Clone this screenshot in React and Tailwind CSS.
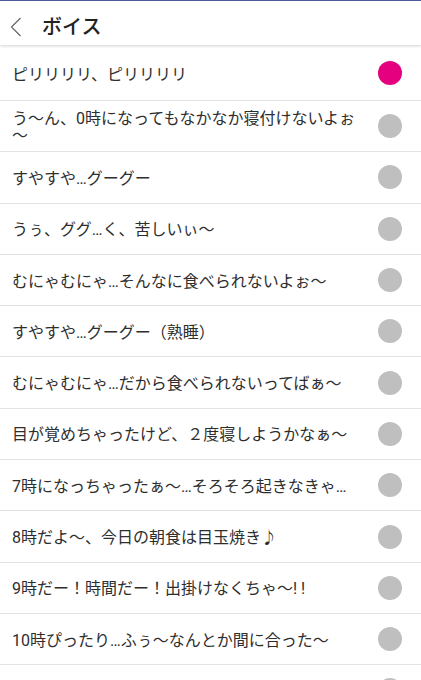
const items = [
  { label: "ピリリリリ、ピリリリリ", active: true },
  { label: "う〜ん、0時になってもなかなか寝付けないよぉ〜" },
  { label: "すやすや…グーグー" },
  { label: "うぅ、ググ…く、苦しいぃ〜" },
  { label: "むにゃむにゃ…そんなに食べられないよぉ〜" },
  { label: "すやすや…グーグー（熟睡）" },
  { label: "むにゃむにゃ…だから食べられないってばぁ〜" },
  { label: "目が覚めちゃったけど、２度寝しようかなぁ〜" },
  { label: "7時になっちゃったぁ〜…そろそろ起きなきゃ…" },
  { label: "8時だよ〜、今日の朝食は目玉焼き♪" },
  { label: "9時だー！時間だー！出掛けなくちゃ〜! !" },
  { label: "10時ぴったり…ふぅ〜なんとか間に合った〜" },
  { label: "" },
];

function Row({ label, active, first }) {
  return (
    <li
      className={`flex items-center border-b border-[#e3e3e3] pl-3 pr-[19px] ${
        first ? "h-[56px] pt-[3px]" : "h-[51.3px] pt-[2px]"
      }`}
    >
      <span className="min-w-0 flex-1 pr-3 text-[16px] leading-[17px] text-[#2e2e2e] [line-break:anywhere]">
        {label}
      </span>
      <span
        className={`-mt-[2px] h-6 w-6 shrink-0 rounded-full ${
          active ? "bg-[#e4007f]" : "bg-[#bfbfbf]"
        }`}
      />
    </li>
  );
}

export default function App() {
  return (
    <div
      className="h-[680px] w-[421px] overflow-hidden bg-white"
      style={{ fontFamily: 'Roboto, "Noto Sans CJK JP", sans-serif' }}
    >
      <header className="relative z-10 flex h-[45px] items-center gap-[20px] border-t border-[#4c5b96] bg-white pl-[10px] pt-[7px] shadow-[0_1px_3px_rgba(0,0,0,0.18)]">
        <svg width="12" height="20" viewBox="0 0 12 20" fill="none">
          <path d="M10.5 1 L1.5 10 L10.5 19" stroke="#666" strokeWidth="1.2" />
        </svg>
        <h1 className="text-[20px] font-medium leading-none text-[#222]">ボイス</h1>
      </header>
      <ul>
        {items.map((item, i) => (
          <Row key={i} {...item} first={i === 0} />
        ))}
      </ul>
    </div>
  );
}
